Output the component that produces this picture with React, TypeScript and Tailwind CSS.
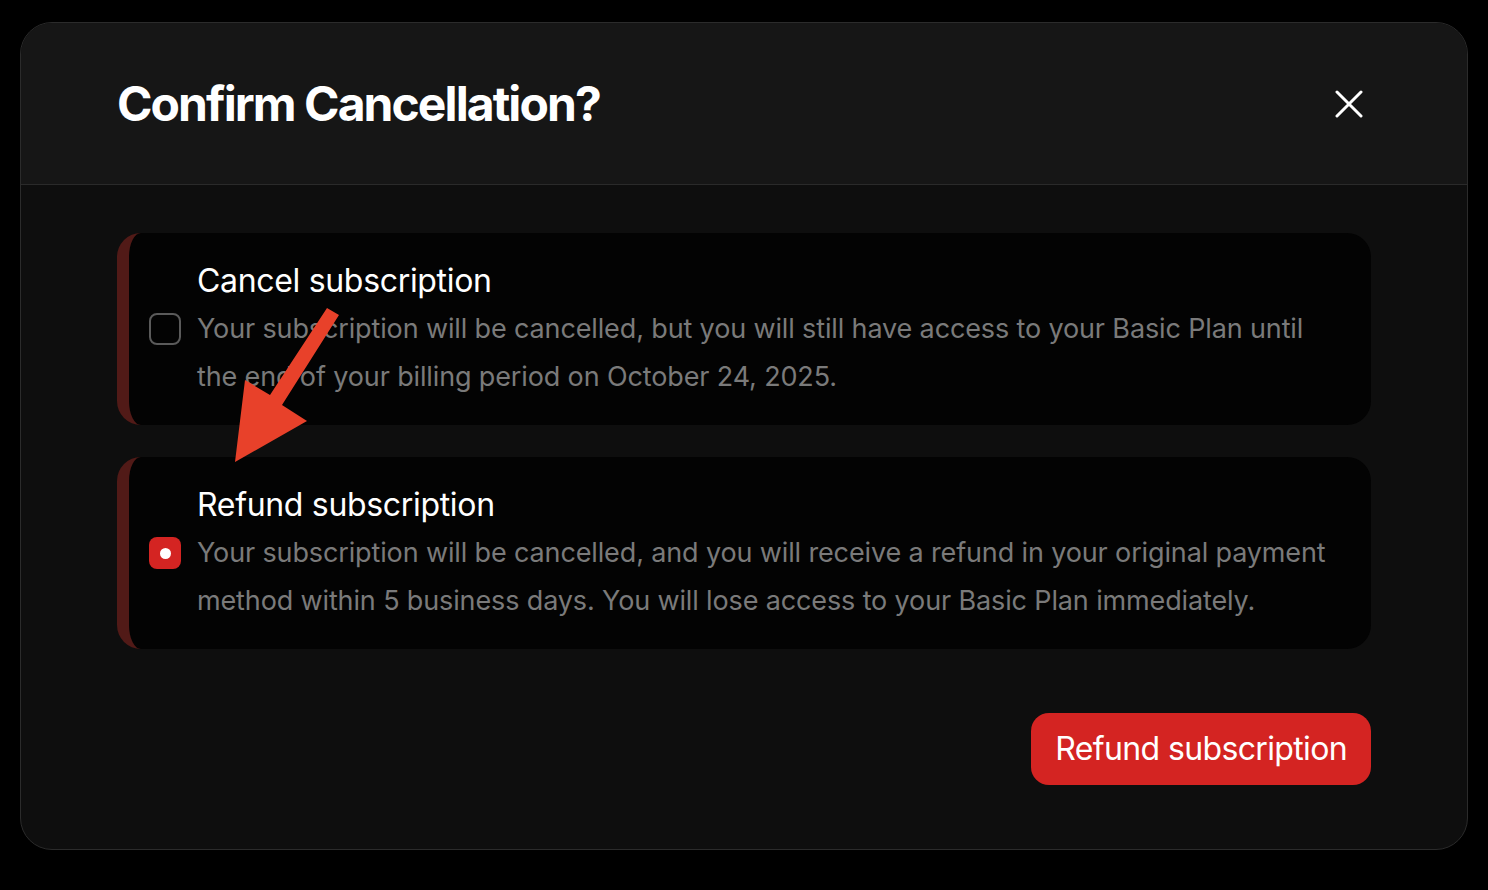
import { useState } from 'react';

const options = [
    {
        id: 'cancel',
        title: 'Cancel subscription',
        description:
            'Your subscription will be cancelled, but you will still have access to your Basic Plan until the end of your billing period on October 24, 2025.',
    },
    {
        id: 'refund',
        title: 'Refund subscription',
        description:
            'Your subscription will be cancelled, and you will receive a refund in your original payment method within 5 business days. You will lose access to your Basic Plan immediately.',
    },
];

export default function App() {
    const [selected, setSelected] = useState('refund');

    return (
        <div
            className="relative min-h-screen w-full bg-black px-5 pt-[22px] pb-10"
            style={{ fontFamily: 'Inter, "Noto Sans", sans-serif' }}
        >
            <div className="overflow-hidden rounded-[32px] border border-[#2b2b2b] bg-[#0e0e0e]">
                {/* Header */}
                <div className="flex h-[162px] items-center justify-between border-b border-[#2a2a2a] bg-[#161616] px-24">
                    <h1 className="text-[48px] font-bold tracking-[-0.04em] text-white">Confirm Cancellation?</h1>
                    <button className="mr-2 flex h-7 w-7 items-center justify-center text-white">
                        <svg width="28" height="28" viewBox="0 0 28 28" fill="none" stroke="currentColor" strokeWidth="3" strokeLinecap="round">
                            <path d="M2 2L26 26M26 2L2 26" />
                        </svg>
                    </button>
                </div>

                {/* Body */}
                <div className="px-24 pt-12 pb-16">
                    <div className="flex flex-col gap-8">
                        {options.map(opt => {
                            const checked = selected === opt.id;
                            return (
                                <div
                                    key={opt.id}
                                    onClick={() => setSelected(opt.id)}
                                    className="flex cursor-pointer items-center gap-4 rounded-3xl border-l-[12px] border-[#511a17] bg-[#030303] py-6 pr-8 pl-5"
                                >
                                    {checked ? (
                                        <span className="flex h-8 w-8 shrink-0 items-center justify-center rounded-lg bg-[#d42422]">
                                            <span className="h-[11px] w-[11px] rounded-full bg-white" />
                                        </span>
                                    ) : (
                                        <span className="h-8 w-8 shrink-0 rounded-lg border-2 border-[#5a5a5a]" />
                                    )}
                                    <div>
                                        <h3 className="text-[32px] leading-[48px] font-normal tracking-[-0.01em] text-white">{opt.title}</h3>
                                        <p className="text-[27px] leading-[48px] tracking-[-0.005em] text-[#7a7a7a]">{opt.description}</p>
                                    </div>
                                </div>
                            );
                        })}
                    </div>

                    <div className="mt-16 flex justify-end">
                        <button className="h-[72px] rounded-[18px] bg-[#d42422] px-6 text-[32px] tracking-[-0.02em] text-white">
                            Refund subscription
                        </button>
                    </div>
                </div>
            </div>

            {/* Annotation arrow */}
            <svg className="pointer-events-none absolute top-0 left-0" width="1488" height="890" viewBox="0 0 1488 890">
                <polygon points="327,308 339,315 282,405 307,421 235,462 245,380 270,395" fill="#e8412a" />
            </svg>
        </div>
    );
}
